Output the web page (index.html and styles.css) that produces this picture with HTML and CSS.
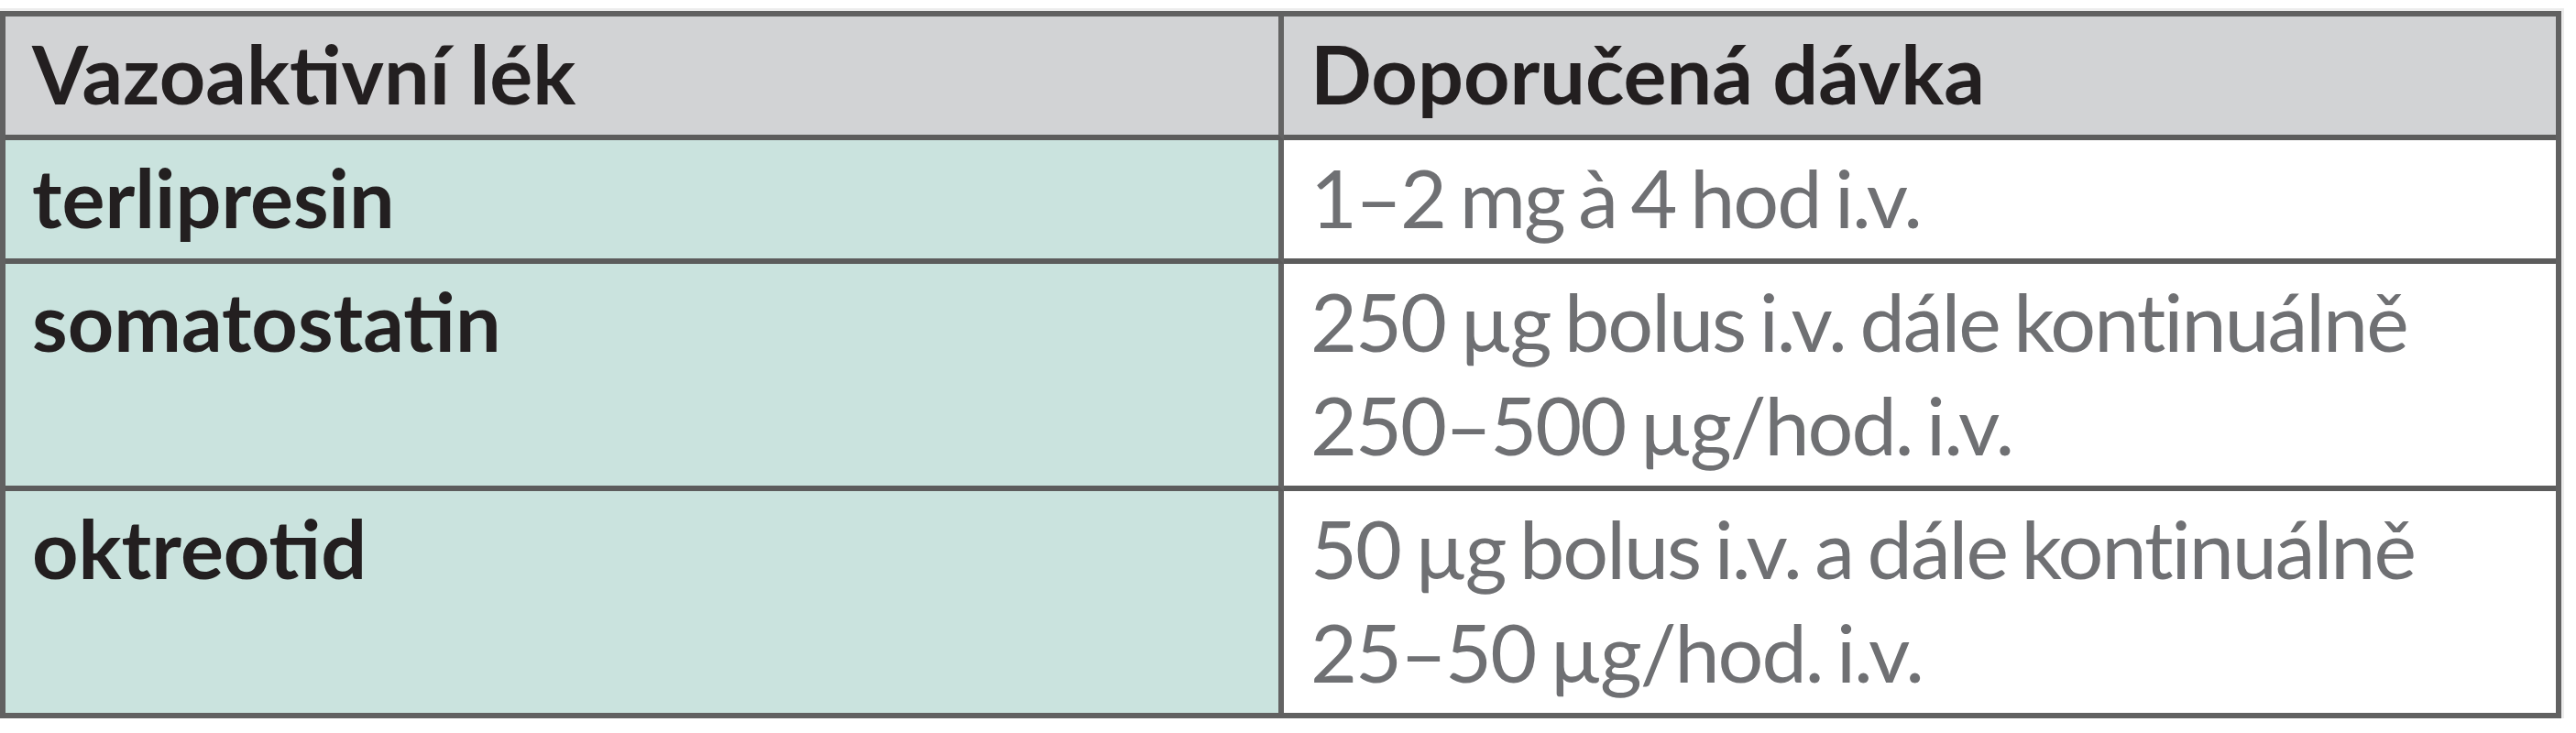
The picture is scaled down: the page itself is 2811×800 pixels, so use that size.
FILE: index.html
```
<!DOCTYPE html>
<html lang="cs">
<head>
<meta charset="utf-8">
<title>Vazoaktivní léky</title>
<link rel="stylesheet" href="styles.css">
</head>
<body>
<table class="dose-table">
  <thead>
    <tr>
      <th class="col-drug">Vazoaktivní lék</th>
      <th class="col-dose">Doporučená dávka</th>
    </tr>
  </thead>
  <tbody>
    <tr>
      <td class="drug">terlipresin</td>
      <td class="dose">1–2 mg à 4 hod i.v.</td>
    </tr>
    <tr>
      <td class="drug">somatostatin</td>
      <td class="dose">250 µg bolus i.v. dále kontinuálně<br>250–500 µg/hod. i.v.</td>
    </tr>
    <tr class="last">
      <td class="drug">oktreotid</td>
      <td class="dose">50 µg bolus i.v. a dále kontinuálně<br>25–50 µg/hod. i.v.</td>
    </tr>
  </tbody>
</table>
</body>
</html>
```
FILE: styles.css
```
html, body {
  margin: 0;
  padding: 0;
  background: #ffffff;
}

body {
  padding-top: 12px;
  font-family: Lato, "Liberation Sans", sans-serif;
}

.dose-table {
  width: 2795px;
  border: 6px solid #616161;
  border-collapse: separate;
  border-spacing: 0;
  box-shadow: 0 0 0 3px #ececec;
  table-layout: fixed;
}

.dose-table th,
.dose-table td {
  text-align: left;
  vertical-align: top;
  font-size: 88px;
  line-height: 113px;
  padding: 6px 20px 10px 29px;
  border-bottom: 6px solid #5c5c5c;
}

.dose-table tr.last td {
  border-bottom: none;
}

.col-drug {
  width: 1340px;
}

.dose-table th {
  background: #d2d3d5;
  color: #231f20;
  font-weight: 700;
}

.dose-table th.col-drug,
.dose-table td.drug {
  border-right: 6px solid #636363;
}

.drug {
  background: #cae3de;
  color: #231f20;
  font-weight: 700;
}

.dose {
  background: #ffffff;
  color: #6f7073;
  font-weight: 400;
  letter-spacing: -2px;
  word-spacing: -5px;
  padding-left: 33px;
}
```
